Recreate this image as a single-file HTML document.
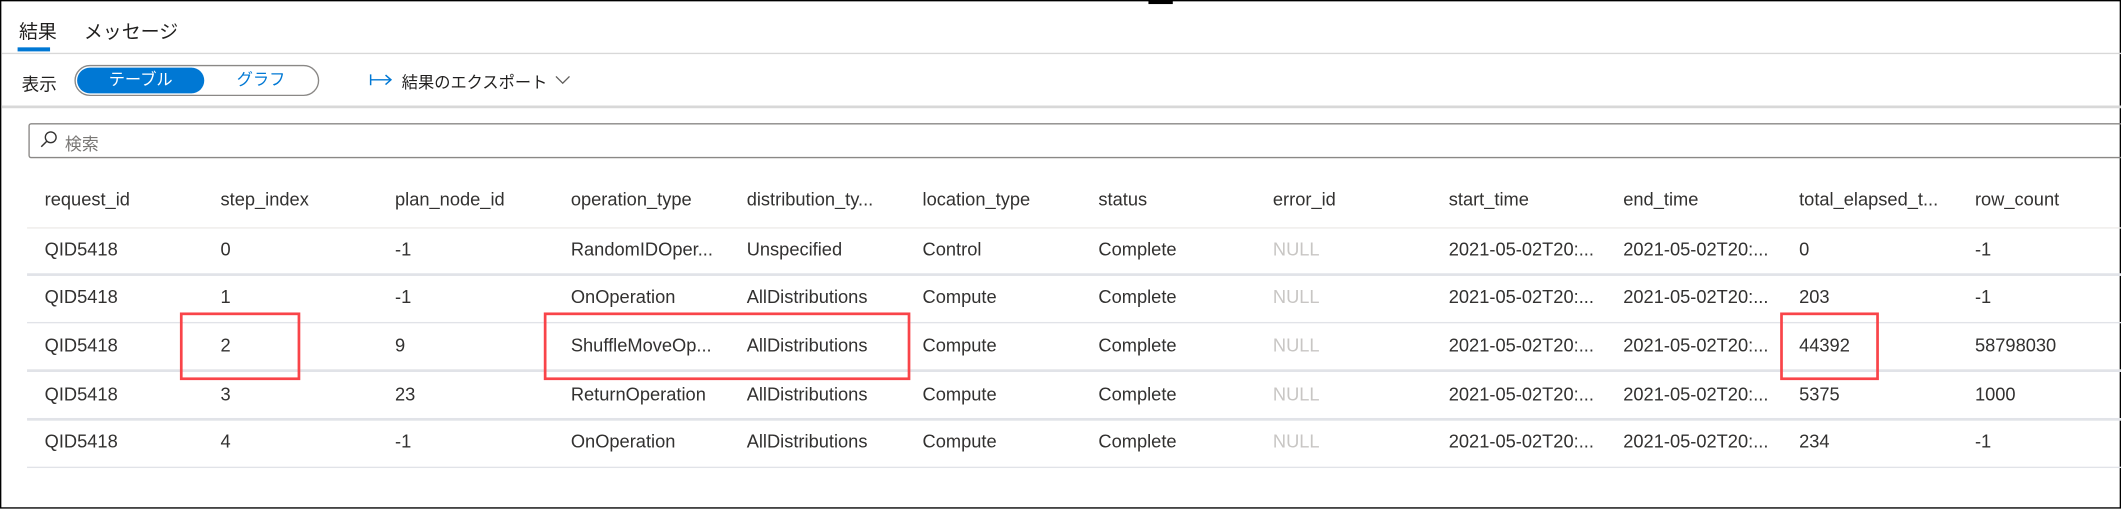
<!DOCTYPE html>
<html><head><meta charset="utf-8">
<style>
html,body{margin:0;padding:0;background:#fff;}
body{width:2121px;height:508px;overflow:hidden;position:relative;}
#w{position:absolute;left:0;top:0;width:1568px;height:376px;transform:scale(1.3527);transform-origin:0 0;
font-family:"Liberation Sans","Noto Sans CJK JP",sans-serif;color:#323130;}
.a{position:absolute;white-space:nowrap;}
.hl{position:absolute;height:1px;background:#e1dfdd;}
.t{font-size:13.5px;line-height:16px;}
.red{position:absolute;border:2px solid #f94449;box-sizing:border-box;}
</style></head><body>
<div id="w">
  <div class="a" style="left:0;top:0;width:1568px;height:376px;box-sizing:border-box;border:1px solid #000;border-top-width:1.5px;"></div>
  <div class="a" style="left:849px;top:0;width:18px;height:3px;background:#000;"></div>

  <div class="a" style="left:14px;top:13px;font-size:14px;color:#201f1e;">結果</div>
  <div class="a" style="left:62px;top:13px;font-size:14px;color:#201f1e;">メッセージ</div>
  <div class="a" style="left:13px;top:35px;width:24px;height:2.5px;background:#0078d4;"></div>
  <div class="hl" style="left:1px;top:38.5px;width:1567px;background:#d8d8d8;"></div>

  <div class="a" style="left:16px;top:52px;font-size:13px;color:#201f1e;">表示</div>
  <div class="a" style="left:55px;top:48px;width:181px;height:23px;box-sizing:border-box;border:1px solid #8a8886;border-radius:12px;"></div>
  <div class="a" style="left:57px;top:50px;width:94px;height:19px;background:#0078d4;border-radius:10px;color:#fff;font-size:12px;line-height:19px;text-align:center;">テーブル</div>
  <div class="a" style="left:152px;top:50px;width:82px;height:19px;color:#0078d4;font-size:12px;line-height:19px;text-align:center;">グラフ</div>
  <svg class="a" style="left:273px;top:53px;" width="18" height="12" viewBox="0 0 18 12"><path d="M1 2v8M1 6h15M12 2.5l4 3.5-4 3.5" stroke="#0078d4" stroke-width="1.1" fill="none"/></svg>
  <div class="a" style="left:297px;top:52px;font-size:12px;color:#201f1e;">結果のエクスポート</div>
  <svg class="a" style="left:410px;top:55px;" width="12" height="8" viewBox="0 0 12 8"><path d="M1 1.5l5 5 5-5" stroke="#605e5c" stroke-width="1" fill="none"/></svg>
  <div class="hl" style="left:1px;top:78px;width:1567px;height:1.5px;background:#d8d8d8;"></div>

  <div class="a" style="left:21px;top:91px;width:1560px;height:26px;box-sizing:border-box;border:1px solid #8a8886;border-radius:2px;"></div>
  <svg class="a" style="left:29px;top:96px;" width="14" height="14" viewBox="0 0 14 14"><circle cx="8.5" cy="5.5" r="4" stroke="#323130" stroke-width="1" fill="none"/><path d="M5.6 8.4L1.5 12.5" stroke="#323130" stroke-width="1.1"/></svg>
  <div class="a" style="left:48px;top:96px;font-size:12.5px;color:#797775;">検索</div>

  <div class="a t" style="left:33px;top:140px;">request_id</div>
  <div class="a t" style="left:163px;top:140px;">step_index</div>
  <div class="a t" style="left:292px;top:140px;">plan_node_id</div>
  <div class="a t" style="left:422px;top:140px;">operation_type</div>
  <div class="a t" style="left:552px;top:140px;">distribution_ty...</div>
  <div class="a t" style="left:682px;top:140px;">location_type</div>
  <div class="a t" style="left:812px;top:140px;">status</div>
  <div class="a t" style="left:941px;top:140px;">error_id</div>
  <div class="a t" style="left:1071px;top:140px;">start_time</div>
  <div class="a t" style="left:1200px;top:140px;">end_time</div>
  <div class="a t" style="left:1330px;top:140px;">total_elapsed_t...</div>
  <div class="a t" style="left:1460px;top:140px;">row_count</div>
  <div class="hl" style="left:20px;top:167.5px;width:1548px;background:#edebe9;"></div>

  <div class="a t" style="left:33px;top:177px;">QID5418</div><div class="a t" style="left:163px;top:177px;">0</div><div class="a t" style="left:292px;top:177px;">-1</div><div class="a t" style="left:422px;top:177px;">RandomIDOper...</div><div class="a t" style="left:552px;top:177px;">Unspecified</div><div class="a t" style="left:682px;top:177px;">Control</div><div class="a t" style="left:812px;top:177px;">Complete</div><div class="a t" style="left:941px;top:177px;color:#c8c6c4;">NULL</div><div class="a t" style="left:1071px;top:177px;">2021-05-02T20:...</div><div class="a t" style="left:1200px;top:177px;">2021-05-02T20:...</div><div class="a t" style="left:1330px;top:177px;">0</div><div class="a t" style="left:1460px;top:177px;">-1</div>
  <div class="hl" style="left:20px;top:202px;width:1548px;background:#e1e3e8;height:1.5px;"></div>

  <div class="a t" style="left:33px;top:212px;">QID5418</div><div class="a t" style="left:163px;top:212px;">1</div><div class="a t" style="left:292px;top:212px;">-1</div><div class="a t" style="left:422px;top:212px;">OnOperation</div><div class="a t" style="left:552px;top:212px;">AllDistributions</div><div class="a t" style="left:682px;top:212px;">Compute</div><div class="a t" style="left:812px;top:212px;">Complete</div><div class="a t" style="left:941px;top:212px;color:#c8c6c4;">NULL</div><div class="a t" style="left:1071px;top:212px;">2021-05-02T20:...</div><div class="a t" style="left:1200px;top:212px;">2021-05-02T20:...</div><div class="a t" style="left:1330px;top:212px;">203</div><div class="a t" style="left:1460px;top:212px;">-1</div>
  <div class="hl" style="left:20px;top:237.5px;width:1548px;background:#e1e3e8;height:1.5px;"></div>

  <div class="a t" style="left:33px;top:248px;">QID5418</div><div class="a t" style="left:163px;top:248px;">2</div><div class="a t" style="left:292px;top:248px;">9</div><div class="a t" style="left:422px;top:248px;">ShuffleMoveOp...</div><div class="a t" style="left:552px;top:248px;">AllDistributions</div><div class="a t" style="left:682px;top:248px;">Compute</div><div class="a t" style="left:812px;top:248px;">Complete</div><div class="a t" style="left:941px;top:248px;color:#c8c6c4;">NULL</div><div class="a t" style="left:1071px;top:248px;">2021-05-02T20:...</div><div class="a t" style="left:1200px;top:248px;">2021-05-02T20:...</div><div class="a t" style="left:1330px;top:248px;">44392</div><div class="a t" style="left:1460px;top:248px;">58798030</div>
  <div class="hl" style="left:20px;top:273px;width:1548px;background:#e1e3e8;height:1.5px;"></div>

  <div class="a t" style="left:33px;top:284px;">QID5418</div><div class="a t" style="left:163px;top:284px;">3</div><div class="a t" style="left:292px;top:284px;">23</div><div class="a t" style="left:422px;top:284px;">ReturnOperation</div><div class="a t" style="left:552px;top:284px;">AllDistributions</div><div class="a t" style="left:682px;top:284px;">Compute</div><div class="a t" style="left:812px;top:284px;">Complete</div><div class="a t" style="left:941px;top:284px;color:#c8c6c4;">NULL</div><div class="a t" style="left:1071px;top:284px;">2021-05-02T20:...</div><div class="a t" style="left:1200px;top:284px;">2021-05-02T20:...</div><div class="a t" style="left:1330px;top:284px;">5375</div><div class="a t" style="left:1460px;top:284px;">1000</div>
  <div class="hl" style="left:20px;top:309px;width:1548px;background:#e1e3e8;height:1.5px;"></div>

  <div class="a t" style="left:33px;top:319px;">QID5418</div><div class="a t" style="left:163px;top:319px;">4</div><div class="a t" style="left:292px;top:319px;">-1</div><div class="a t" style="left:422px;top:319px;">OnOperation</div><div class="a t" style="left:552px;top:319px;">AllDistributions</div><div class="a t" style="left:682px;top:319px;">Compute</div><div class="a t" style="left:812px;top:319px;">Complete</div><div class="a t" style="left:941px;top:319px;color:#c8c6c4;">NULL</div><div class="a t" style="left:1071px;top:319px;">2021-05-02T20:...</div><div class="a t" style="left:1200px;top:319px;">2021-05-02T20:...</div><div class="a t" style="left:1330px;top:319px;">234</div><div class="a t" style="left:1460px;top:319px;">-1</div>
  <div class="hl" style="left:20px;top:344.5px;width:1548px;background:#e1e3e8;height:1.5px;"></div>

  <div class="red" style="left:133px;top:231px;width:89px;height:50px;"></div>
  <div class="red" style="left:402px;top:231px;width:271px;height:50px;"></div>
  <div class="red" style="left:1316px;top:231px;width:73px;height:50px;"></div>
</div>
</body></html>
